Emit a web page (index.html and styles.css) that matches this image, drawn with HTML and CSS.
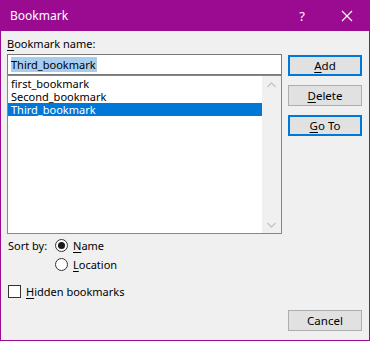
FILE: index.html
```html
<!DOCTYPE html>
<html lang="en">
<head>
  <meta charset="UTF-8">
  <title>Bookmark</title>
  <link rel="stylesheet" href="styles.css">
</head>
<body>

  <div class="dialog">
    <div class="title-bar">
      <span class="title">Bookmark</span>
      <span class="help">?</span>
      <svg class="close" width="12" height="12" viewBox="0 0 12 12">
        <path d="M1 1 L11 11 M11 1 L1 11" stroke="#fff" stroke-width="1.2" fill="none"/>
      </svg>
    </div>

    <div class="content">
      <div class="main-row">
        <div class="left-col">
          <label class="field-label"><u>B</u>ookmark name:</label>
          <div class="name-input"><span class="sel-text">Third_bookmark</span></div>
          <div class="listbox">
            <ul class="items">
              <li><span>first_bookmark</span></li>
              <li><span>Second_bookmark</span></li>
              <li class="selected"><span>Third_bookmark</span></li>
            </ul>
            <div class="scrollbar">
              <svg width="9" height="6" viewBox="0 0 9 6"><path d="M0.5 5 L4.5 1 L8.5 5" stroke="#c4c4c4" stroke-width="1.3" fill="none"/></svg>
              <svg width="9" height="6" viewBox="0 0 9 6"><path d="M0.5 1 L4.5 5 L8.5 1" stroke="#c4c4c4" stroke-width="1.3" fill="none"/></svg>
            </div>
          </div>
        </div>

        <div class="btn-col">
          <button class="btn default"><u>A</u>dd</button>
          <button class="btn"><u>D</u>elete</button>
          <button class="btn default"><u>G</u>o To</button>
        </div>
      </div>

      <div class="sort-row">
        <span class="sort-label">Sort by:</span>
        <div class="radios">
          <div class="option"><span class="radio checked"></span><u>N</u>ame</div>
          <div class="option"><span class="radio"></span><u>L</u>ocation</div>
        </div>
      </div>

      <div class="option check-row"><span class="checkbox"></span><u>H</u>idden bookmarks</div>

      <div class="footer">
        <button class="btn">Cancel</button>
      </div>
    </div>
  </div>

</body>
</html>
```

FILE: styles.css
```css
* {
  box-sizing: border-box;
  margin: 0;
  padding: 0;
}

body {
  font-family: 'Segoe UI', 'Noto Sans', sans-serif;
  font-size: 11px;
  color: #000;
  background: #fff;
}

u {
  text-decoration: underline;
  text-underline-offset: 2px;
}

.dialog {
  width: 370px;
  height: 341px;
  background: #f0f0f0;
  border: 1px solid #9b0b92;
  border-top: none;
  display: flex;
  flex-direction: column;
}

.title-bar {
  height: 31px;
  margin: 0 -1px;
  background: #9b0b92;
  color: #fff;
  display: flex;
  align-items: center;
  padding-left: 10px;
}

.title {
  font-size: 12px;
  flex: 1;
}

.help {
  font-size: 13px;
  margin-right: 36px;
}

.close {
  margin-right: 17px;
}

.content {
  padding: 6px 7px 0 6px;
}

.main-row {
  display: flex;
  gap: 6px;
}

.left-col {
  width: 275px;
}

.field-label {
  display: block;
  line-height: 14px;
  margin-bottom: 3px;
}

.name-input {
  height: 21px;
  background: #fff;
  border: 1px solid #7a7a7a;
  padding: 2px 3px 0;
  line-height: 15px;
}

.sel-text {
  background: #a7cdee;
  padding: 0 1px 0 0;
}

.listbox {
  height: 159px;
  background: #fff;
  border: 1px solid #828790;
  display: flex;
}

.items {
  list-style: none;
  flex: 1;
  padding-top: 1px;
}

.items li {
  height: 13px;
  padding-left: 3px;
  white-space: nowrap;
  overflow: hidden;
}

.items li span {
  display: inline-block;
  height: 13px;
  line-height: 13px;
  vertical-align: top;
}

.items li.selected {
  background: #0078d7;
  color: #fff;
}

.scrollbar {
  width: 19px;
  background: #f0f0f0;
  display: flex;
  flex-direction: column;
  justify-content: space-between;
  align-items: center;
  padding: 6px 0 5px;
}

.btn-col {
  width: 74px;
  padding-top: 18px;
  display: flex;
  flex-direction: column;
  gap: 9px;
}

.btn {
  width: 74px;
  height: 21px;
  font-family: inherit;
  font-size: 11.5px;
  color: #000;
  background: #e1e1e1;
  border: 1px solid #adadad;
  line-height: 17px;
}

.btn.default {
  border: 2px solid #0078d7;
}

.sort-row {
  display: flex;
  margin-top: 2px;
}

.sort-label {
  width: 48px;
  line-height: 19px;
  padding-left: 1px;
}

.option {
  height: 19px;
  display: flex;
  align-items: center;
}

.radio {
  width: 13px;
  height: 13px;
  border: 1px solid #333;
  border-radius: 50%;
  background: #fff;
  margin-right: 5px;
  display: flex;
  align-items: center;
  justify-content: center;
}

.radio.checked::after {
  content: "";
  width: 7px;
  height: 7px;
  border-radius: 50%;
  background: #1a1a1a;
}

.check-row {
  margin-top: 8px;
  padding-left: 1px;
}

.checkbox {
  width: 13px;
  height: 13px;
  border: 1px solid #333;
  background: #fff;
  margin-right: 5px;
}

.footer {
  display: flex;
  justify-content: flex-end;
  margin-top: 9px;
}
```
